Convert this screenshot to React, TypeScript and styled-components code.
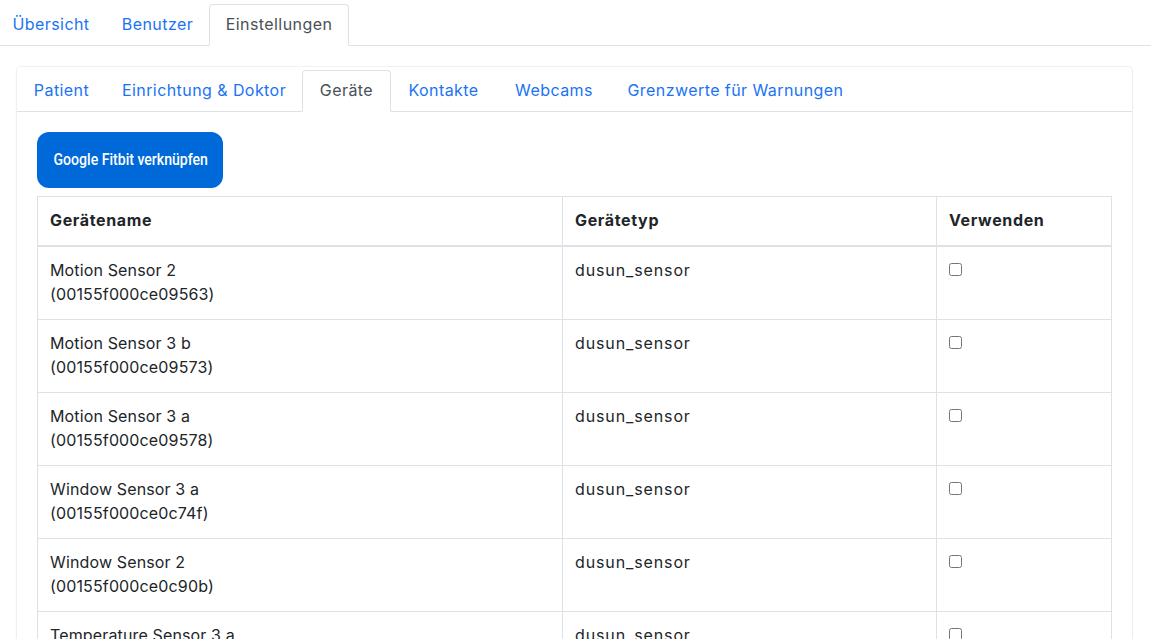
import React from "react";
import styled, { createGlobalStyle } from "styled-components";

const Global = createGlobalStyle`
  html, body { margin: 0; padding: 0; background: #fff; overflow: hidden; }
  body { font-family: "Inter", "Noto Sans", sans-serif; font-size: 16px; line-height: 24px; color: #212529; }
  * { box-sizing: border-box; }
`;

const Page = styled.div`
  height: 639px;
  overflow: hidden;
`;

const TabBar = styled.ul<{ $inner?: boolean }>`
  display: flex;
  list-style: none;
  margin: 0 0 0 ${(p) => (p.$inner ? "0" : "-4px")};
  padding: ${(p) => (p.$inner ? "3px" : "4px")} 0 0 0;
  height: ${(p) => (p.$inner ? "45px" : "46px")};
  border-bottom: 1px solid #dee2e6;
`;

const Tab = styled.li<{ $active?: boolean; $w: number }>`
  flex: none;
  width: ${(p) => p.$w}px;
  height: 42px;
  padding-bottom: 3px;
  display: flex;
  align-items: center;
  justify-content: center;
  font-size: 16px;
  letter-spacing: 0.43px;
  border-radius: 4px 4px 0 0;
  color: ${(p) => (p.$active ? "#495057" : "#1a73f5")};
  background: ${(p) => (p.$active ? "#fff" : "transparent")};
  border: 1px solid ${(p) => (p.$active ? "#dee2e6" : "transparent")};
  border-bottom-color: ${(p) => (p.$active ? "#fff" : "transparent")};
`;

const Card = styled.section`
  margin: 20px 18px 0 16px;
  border: 1px solid #edeff2;
  border-top-color: #f1f2f4;
  border-radius: 5px;
  box-shadow: 0 1px 3px rgba(0, 0, 0, 0.04);
  background: #fff;
`;

const CardBody = styled.div`
  padding: 20px 20px 0 20px;
`;

const FitbitButton = styled.button`
  display: block;
  width: 186px;
  height: 56px;
  padding: 0 0 2px 2px;
  border: 0;
  border-radius: 12px;
  background: #0069d9;
  color: #fff;
  font-family: "Roboto", "Liberation Sans", sans-serif;
  font-size: 16px;
  font-weight: 500;
  margin-bottom: 8px;
`;

const ButtonLabel = styled.span`
  display: inline-block;
  transform: scaleX(0.88);
  white-space: nowrap;
`;

const Table = styled.table`
  width: 1074px;
  table-layout: fixed;
  border-collapse: collapse;
  border: 1px solid #dee2e6;
`;

const HeadCell = styled.th<{ $w: number }>`
  width: ${(p) => p.$w}px;
  height: 49px;
  padding: 11px 12px 13px;
  text-align: left;
  font-weight: 700;
  font-size: 16px;
  letter-spacing: 0.65px;
  color: #212529;
  border: 1px solid #dee2e6;
  border-bottom-width: 2px;
`;

const Row = styled.tr`
  height: 73px;
`;

const Cell = styled.td<{ $spacing?: number }>`
  padding: 11px 12px 13px;
  vertical-align: top;
  font-size: 16px;
  letter-spacing: ${(p) => p.$spacing ?? 0.14}px;
  border: 1px solid #dee2e6;
`;

const Check = styled.input.attrs({ type: "checkbox" })`
  display: block;
  width: 13px;
  height: 13px;
  margin: 5px 0 0 0;
`;

const devices = [
  { name: "Motion Sensor 2", id: "(00155f000ce09563)" },
  { name: "Motion Sensor 3 b", id: "(00155f000ce09573)" },
  { name: "Motion Sensor 3 a", id: "(00155f000ce09578)" },
  { name: "Window Sensor 3 a", id: "(00155f000ce0c74f)" },
  { name: "Window Sensor 2", id: "(00155f000ce0c90b)" },
  { name: "Temperature Sensor 3 a", id: "" },
];

export default function App() {
  return (
    <Page>
      <Global />
      <TabBar>
        <Tab $w={110}>Übersicht</Tab>
        <Tab $w={103}>Benutzer</Tab>
        <Tab $w={140} $active>Einstellungen</Tab>
      </TabBar>
      <Card>
        <TabBar $inner>
          <Tab $w={89}>Patient</Tab>
          <Tab $w={196}>Einrichtung &amp; Doktor</Tab>
          <Tab $w={89} $active>Geräte</Tab>
          <Tab $w={105}>Kontakte</Tab>
          <Tab $w={116}>Webcams</Tab>
          <Tab $w={247}>Grenzwerte für Warnungen</Tab>
        </TabBar>
        <CardBody>
          <FitbitButton><ButtonLabel>Google Fitbit verknüpfen</ButtonLabel></FitbitButton>
          <Table>
            <thead>
              <tr>
                <HeadCell $w={525}>Gerätename</HeadCell>
                <HeadCell $w={374}>Gerätetyp</HeadCell>
                <HeadCell $w={175}>Verwenden</HeadCell>
              </tr>
            </thead>
            <tbody>
              {devices.map(({ name, id }) => (
                <Row key={name}>
                  <Cell>{name}<br />{id}</Cell>
                  <Cell $spacing={0.88}>dusun_sensor</Cell>
                  <Cell><Check /></Cell>
                </Row>
              ))}
            </tbody>
          </Table>
        </CardBody>
      </Card>
    </Page>
  );
}
